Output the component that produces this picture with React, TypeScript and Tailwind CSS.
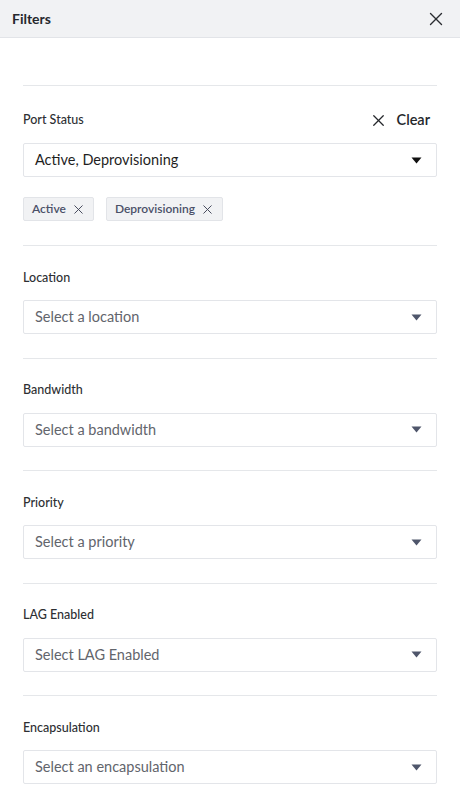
import { X } from "lucide-react";

const sections = [
  { label: "Location", placeholder: "Select a location" },
  { label: "Bandwidth", placeholder: "Select a bandwidth" },
  { label: "Priority", placeholder: "Select a priority" },
  { label: "LAG Enabled", placeholder: "Select LAG Enabled" },
  { label: "Encapsulation", placeholder: "Select an encapsulation" },
];

function Caret({ dark }: { dark?: boolean }) {
  return (
    <svg width="11" height="7" viewBox="0 0 11 7" className="shrink-0">
      <path d="M0.5 0.5h10L5.5 6.5z" fill={dark ? "#111111" : "#4f566b"} />
    </svg>
  );
}

function Select({ value, placeholder }: { value?: string; placeholder: string }) {
  return (
    <div className="h-[34px] flex items-center justify-between border border-[#e3e5e9] rounded-[2px] bg-white pl-[11px] pr-[14px]">
      <span className={value ? "text-[14.5px] text-[#1f1f1f]" : "text-[14.5px] text-[#62656c]"}>{value ?? placeholder}</span>
      <Caret dark={!!value} />
    </div>
  );
}

function Tag({ text }: { text: string }) {
  return (
    <div className="h-[24px] flex items-center gap-[5px] pl-[8px] pr-[7px] bg-[#f1f2f4] border border-[#e2e4e8] rounded-[2px] text-[12px] font-semibold text-[#4a5068]">
      {text}
      <X size={15} strokeWidth={1.5} className="text-[#3d4154]" />
    </div>
  );
}

export default function App() {
  return (
    <div className="w-[460px] min-h-[800px] bg-white" style={{ fontFamily: "Lato, 'Open Sans', sans-serif" }}>
      <div className="h-[38px] flex items-center justify-between pl-[12px] pr-[13px] bg-[#f1f2f4] border-b border-[#e2e4e8]">
        <span className="text-[14px] font-bold text-[#26282d]">Filters</span>
        <X size={22} strokeWidth={1.5} className="text-[#2a2c31]" />
      </div>
      <div className="px-[23px] pt-[47px]">
        <div className="border-t border-[#e5e7ea] pt-[24px] pb-[24px]">
          <div className="h-[20px] flex items-center justify-between">
            <span className="text-[12.5px] font-medium text-[#2d2f33]">Port Status</span>
            <button className="flex items-center gap-[9px] pr-[7px] text-[14.5px] font-semibold text-[#25272b]">
              <X size={19} strokeWidth={1.6} />
              Clear
            </button>
          </div>
          <div className="mt-[13px]">
            <Select value="Active, Deprovisioning" placeholder="" />
          </div>
          <div className="mt-[20px] flex gap-[12px]">
            <Tag text="Active" />
            <Tag text="Deprovisioning" />
          </div>
        </div>
        {sections.map((s) => (
          <div key={s.label} className="border-t border-[#e5e7ea] pt-[24px] pb-[23.5px]">
            <div className="h-[16px] flex items-center text-[12.5px] font-medium text-[#2d2f33]">{s.label}</div>
            <div className="mt-[14px]">
              <Select placeholder={s.placeholder} />
            </div>
          </div>
        ))}
      </div>
    </div>
  );
}
